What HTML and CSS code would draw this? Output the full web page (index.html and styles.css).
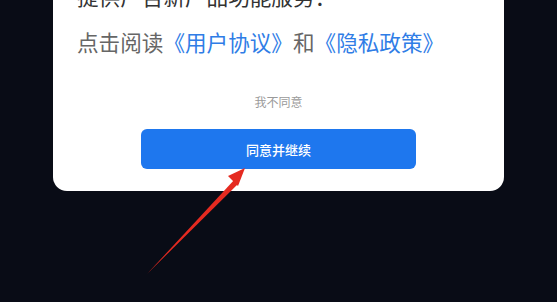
FILE: index.html
```html
<!DOCTYPE html>
<html>
<head>
    <title>隐私协议</title>
    <link rel="stylesheet" href="styles.css">
</head>
<body>
<div class="dialog">
    <p class="terms">
        <span class="line-dark">提供广告新产品功能服务：</span><br>
        点击阅读<a href="#">《用户协议》</a>和<a href="#">《隐私政策》</a>
    </p>
    <button class="decline">我不同意</button>
    <button class="agree">同意并继续</button>
</div>

<!-- annotation arrow -->
<svg class="arrow" xmlns="http://www.w3.org/2000/svg" viewBox="0 0 557 302" width="557" height="302">
    <polygon points="147,274 235,179 239,183" fill="#e52a20"/>
    <polygon points="245,168 228,176 238,186" fill="#e52a20"/>
</svg>
</body>
</html>
```

FILE: styles.css
```css
body {
    margin: 0;
    height: 302px;
    overflow: hidden;
    background-color: #090c16;
    font-family: "Noto Sans CJK SC", "Noto Sans", sans-serif;
}
.dialog {
    margin: -27px 0 0 53px;
    width: 451px;
    padding: 0 24px 22px;
    box-sizing: border-box;
    background-color: #FFFFFF;
    border-radius: 0 0 14px 14px;
    display: flex;
    flex-direction: column;
    align-items: center;
}
.terms {
    margin: 0;
    align-self: stretch;
    font-size: 21.6px;
    line-height: 46px;
    color: #666666;
    white-space: nowrap;
}
.terms .line-dark {
    color: #333333;
}
.terms a {
    color: #2f7de6;
    text-decoration: none;
}
.decline {
    margin-top: 27px;
    padding: 0;
    border: none;
    background: none;
    font-family: inherit;
    font-size: 12px;
    line-height: 20px;
    color: #9a9a9a;
}
.agree {
    margin-top: 17px;
    width: 275px;
    height: 40px;
    border: none;
    border-radius: 6px;
    background-color: #1e77ee;
    color: #FFFFFF;
    font-family: inherit;
    font-size: 13px;
    font-weight: 500;
}
.arrow {
    position: absolute;
    left: 0;
    top: 0;
}
```
